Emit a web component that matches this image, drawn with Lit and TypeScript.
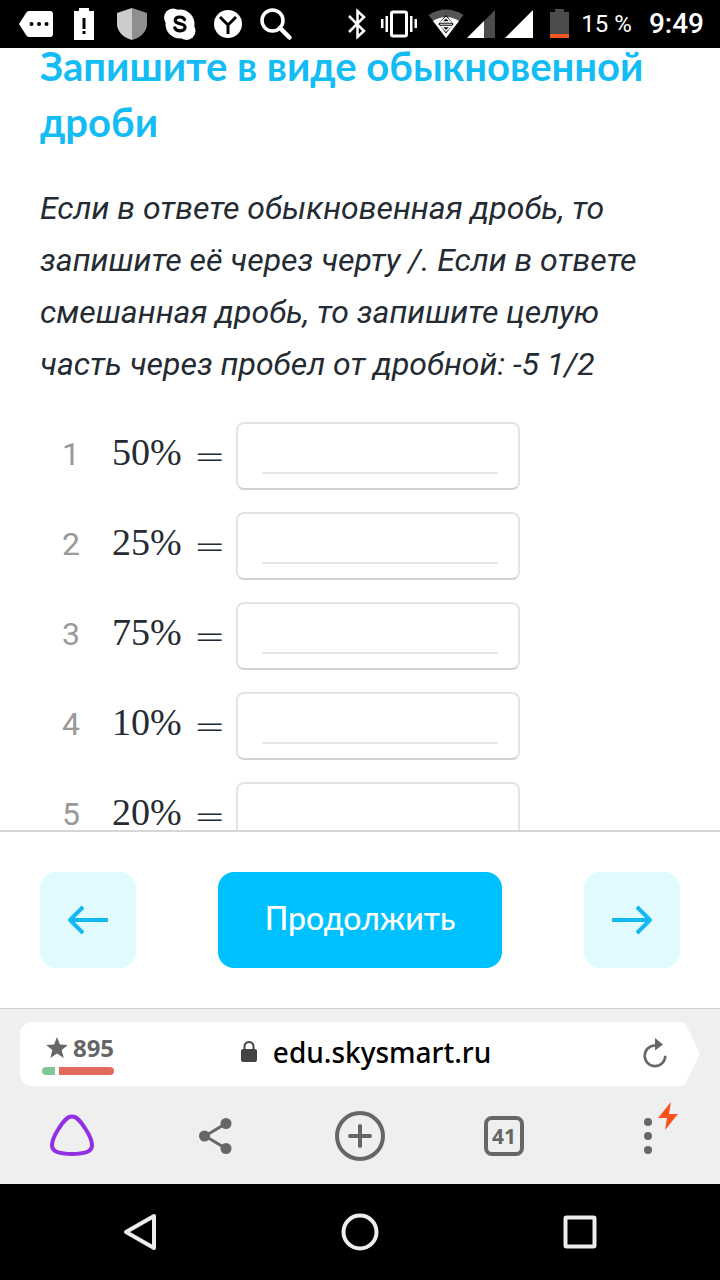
import { LitElement, html, css, svg } from "lit";
import { customElement, property } from "lit/decorators.js";

@customElement("status-bar")
class StatusBar extends LitElement {
  static styles = css`
    :host {
      display: flex;
      align-items: center;
      justify-content: space-between;
      height: 48px;
      padding: 0 16px 0 12px;
      background: #000;
      color: #fff;
      font-family: Roboto, sans-serif;
    }
    .group {
      display: flex;
      align-items: center;
    }
    svg {
      display: block;
      height: 48px;
    }
    .charge {
      margin-left: 3px;
      font-size: 24px;
      line-height: 48px;
    }
    .clock {
      margin-left: 17px;
      font-size: 28px;
      line-height: 48px;
      font-weight: 500;
    }
  `;

  render() {
    return html`
      <div class="group">
        <svg width="48" viewBox="12 0 48 48">
          <path d="M29 11H50q3 0 3 3V34q0 3-3 3H29q-2 0-3-2L19 24l7-11q1-2 3-2z" fill="#fff" />
          <circle cx="31.500" cy="24" r="2" /><circle cx="39" cy="24" r="2" /><circle cx="46.500" cy="24" r="2" />
        </svg>
        <svg width="48" viewBox="60 0 48 48">
          <path d="M79 8h10v3h5v29H74V11h5z" fill="#fff" />
          <path d="M82.500 18h3v11h-3zM82.500 31h3v3h-3z" />
        </svg>
        <svg width="48" viewBox="108 0 48 48">
          <path d="M132 8l15 5v11c0 8-7 14-15 16z" fill="#8f8f8f" />
          <path d="M132 8l-15 5v11c0 8 7 14 15 16z" fill="#ccc" />
        </svg>
        <svg width="48" viewBox="156 0 48 48">
          <circle cx="173" cy="17.500" r="9" fill="#fff" /><circle cx="186.500" cy="31" r="9" fill="#fff" />
          <circle cx="180" cy="24" r="14.500" fill="#fff" />
          <path d="M184.500 19.500c-1-2-2.600-2.500-4.800-2.500-2.800 0-4.500 1.300-4.500 3.300 0 5 9.800 2 9.800 7 0 2.300-2.200 3.500-5 3.500-2.500 0-4.300-1-5.200-3" fill="none" stroke="#000" stroke-width="3.200" stroke-linecap="round" />
        </svg>
        <svg width="48" viewBox="204 0 48 48">
          <circle cx="228" cy="24" r="14" fill="#fff" />
          <path d="M220 17l8 8 8-8M228 25v9" fill="none" stroke="#000" stroke-width="3" />
        </svg>
        <svg width="48" viewBox="252 0 48 48">
          <g fill="none" stroke="#fff">
            <circle cx="272.500" cy="20.500" r="10.500" stroke-width="3.500" />
            <path d="M280 28l9.500 9.500" stroke-width="4.500" stroke-linecap="round" />
          </g>
        </svg>
      </div>
      <div class="group">
        <svg width="30" viewBox="345 0 30 48">
          <path d="M349 16l15 15-6.500 6V11l6.500 6-15 15" fill="none" stroke="#fff" stroke-width="2.500" />
        </svg>
        <svg width="48" viewBox="375 0 48 48">
          <rect x="391.500" y="12" width="15" height="24" rx="1.500" fill="none" stroke="#fff" stroke-width="3" />
          <path d="M381 19h2.500v9H381zM385.500 16h2.500v16h-2.500zM410 16h2.500v16H410zM414.500 19h2.500v9h-2.500z" fill="#fff" />
        </svg>
        <svg width="44" viewBox="423 0 44 48">
          <path d="M428.500 15q17.500-11 35 0L446 38z" fill="#555" />
          <path d="M433 21q13-8 26 0L446 38z" fill="#fff" />
          <path d="M446 15l7.500 9-7.500 9.500-7.500-9.500z" />
          <path d="M446 17.500l4.500 4.500h-9zM446 31l4.500-4.500h-9z" fill="none" stroke="#fff" stroke-width="1.500" />
          <path d="M440 24.200h12" stroke="#fff" stroke-width="1" />
        </svg>
        <svg width="34" viewBox="467 0 34 48">
          <path d="M495 10v28h-28z" fill="#4c4c4c" /><path d="M484 21v17h-17z" fill="#fff" />
        </svg>
        <svg width="39" viewBox="501 0 39 48">
          <path d="M533 10v28h-28z" fill="#fff" />
        </svg>
        <svg width="38" viewBox="540 0 38 48">
          <path d="M555 9h9v3h5v22h-19V12h5z" fill="#4c4c4c" /><path d="M550 34h19v4h-19z" fill="#f4581c" />
        </svg>
        <span class="charge">15 %</span>
        <span class="clock">9:49</span>
      </div>
    `;
  }
}

@customElement("answer-row")
class AnswerRow extends LitElement {
  @property({ type: Number }) index = 1;
  @property() percent = "";

  static styles = css`
    :host {
      display: grid;
      grid-template-columns: 52px 124px minmax(0, 284px);
      align-items: center;
      padding-left: 20px;
    }
    .index {
      color: #999;
      font-size: 32px;
      line-height: 60px;
      padding: 0 2px 4px;
    }
    .formula {
      display: flex;
      align-items: center;
      gap: 12px;
      color: #242b33;
      font-family: "Liberation Serif", serif;
      font-size: 38px;
      line-height: 60px;
    }
    .percent {
      padding-bottom: 8px;
    }
    .equals {
      font-family: "DejaVu Sans", sans-serif;
      font-weight: 200;
    }
    .box {
      box-sizing: border-box;
      height: 68px;
      padding: 0 20px 14px 24px;
      border: 2px solid #e4e4e0;
      border-bottom-color: #d2d2d2;
      border-radius: 8px;
      background: #fff;
    }
    .answer {
      box-sizing: border-box;
      display: block;
      width: 100%;
      height: 50px;
      padding: 0;
      border: 0;
      border-bottom: 2px solid #e6e6e6;
      background: none;
      color: #242b33;
      font: 32px Roboto, sans-serif;
      outline: none;
    }
  `;

  render() {
    return html`
      <span class="index">${this.index}</span>
      <label class="formula" for="answer"><span class="percent">${this.percent}%</span><span class="equals">=</span></label>
      <div class="box"><input class="answer" id="answer" type="text" autocomplete="off" /></div>
    `;
  }
}

@customElement("browser-bar")
class BrowserBar extends LitElement {
  static styles = css`
    :host {
      display: block;
      padding: 13px 0 0;
      border-top: 1px solid #d0d0d0;
      background: #efefef;
      font-family: "Noto Sans", sans-serif;
    }
    button {
      display: flex;
      align-items: center;
      justify-content: center;
      padding: 0;
      border: 0;
      background: none;
      color: #666;
      font-family: inherit;
    }
    svg {
      display: block;
    }
    .omnibox {
      display: flex;
      margin: 0 20px;
      height: 64px;
    }
    .field {
      flex: 1;
      display: grid;
      grid-template-columns: 116px 1fr 50px;
      border-radius: 12px 0 0 12px;
      background: #fff;
    }
    .rating {
      flex-direction: column;
      gap: 5px;
    }
    .score {
      display: flex;
      align-items: center;
      gap: 5px;
      padding-left: 4px;
      font-size: 24px;
      line-height: 28px;
      font-weight: 700;
    }
    .meter {
      display: flex;
      gap: 4px;
      width: 72px;
      height: 8px;
    }
    .good {
      flex: 13;
      border-radius: 4px 0 0 4px;
      background: #7fc796;
    }
    .bad {
      flex: 55;
      border-radius: 0 4px 4px 0;
      background: #e26b5d;
    }
    .address {
      gap: 16px;
      padding: 0 34px 4px 0;
      color: #000;
      font-size: 28px;
      font-weight: 500;
    }
    .tools {
      box-sizing: border-box;
      display: grid;
      grid-template-columns: repeat(5, 1fr);
      height: 98px;
      padding-top: 2px;
    }
    .count {
      box-sizing: border-box;
      width: 40px;
      height: 40px;
      border: 4px solid #666;
      border-radius: 8px;
      font-size: 21px;
      line-height: 32px;
      font-weight: 700;
    }
  `;

  render() {
    return html`
      <div class="omnibox">
        <div class="field">
          <button class="rating" aria-label="Рейтинг сайта">
            <span class="score">
              <svg width="22" height="22" viewBox="0 0 22 22">
                <path d="M11 0l2.900 7.500 7.900.5-6.100 5 2 8L11 16.600 4.300 21l2-8L.2 8l7.900-.5z" fill="#666" />
              </svg>
              895
            </span>
            <span class="meter"><span class="good"></span><span class="bad"></span></span>
          </button>
          <button class="address">
            <svg width="16" height="22" viewBox="0 0 16 22">
              <rect y="8" width="16" height="13" rx="2" fill="#444" />
              <path d="M3.500 9V5.500a4.500 4.500 0 0 1 9 0V9" fill="none" stroke="#444" stroke-width="2" />
            </svg>
            edu.skysmart.ru
          </button>
          <button aria-label="Обновить">
            <svg width="26" height="34" viewBox="0 0 26 34">
              <path d="M13 8.500A10.300 10.300 0 1 0 23.300 18.800" fill="none" stroke="#666" stroke-width="2.600" />
              <path d="M13 1l8 6.500-8 6z" fill="#666" />
            </svg>
          </button>
        </div>
        <svg width="20" height="64" viewBox="0 0 20 64">
          <path d="M0 0q4 0 6 3L20 31.500 6 61q-2 3-6 3z" fill="#fff" />
        </svg>
      </div>
      <div class="tools">
        <button aria-label="Алиса">
          <svg width="48" height="48" viewBox="0 0 48 48">
            <path d="M24 4.500c5.500 0 9.500 6 13.500 12.500C41.500 23 44 29.500 44 33.500c0 6.500-9 8.500-20 8.500S4 40 4 33.500C4 29.500 6.500 23 10.500 17 14.500 10.500 18.500 4.500 24 4.500z" fill="none" stroke="#9430e4" stroke-width="4" />
          </svg>
        </button>
        <button aria-label="Поделиться">
          <svg width="36" height="38" viewBox="0 0 36 38">
            <path d="M28 6.500L7 19l21 12.500" fill="none" stroke="#666" stroke-width="3" />
            <g fill="#666"><circle cx="28" cy="6.500" r="5.500" /><circle cx="6.500" cy="19" r="5.500" /><circle cx="28" cy="31.500" r="5.500" /></g>
          </svg>
        </button>
        <button aria-label="Новая вкладка">
          <svg width="50" height="50" viewBox="0 0 50 50">
            <circle cx="25" cy="25" r="23" fill="none" stroke="#666" stroke-width="4" />
            <path d="M25 15v20M15 25h20" stroke="#666" stroke-width="4" stroke-linecap="round" />
          </svg>
        </button>
        <button aria-label="Вкладки"><span class="count">41</span></button>
        <button aria-label="Меню">
          <svg width="72" height="72" viewBox="0 0 72 72">
            <g fill="#666"><circle cx="36" cy="22" r="4" /><circle cx="36" cy="36" r="4" /><circle cx="36" cy="50" r="4" /></g>
            <path d="M59 2L46 18h9l-2 12 13-16h-9z" fill="#f9521a" />
          </svg>
        </button>
      </div>
    `;
  }
}

const arrow = (points: string) => svg`
  <path d=${points} fill="none" stroke="#16b8f3" stroke-width="4" stroke-linejoin="round" />
`;

@customElement("app-root")
class AppRoot extends LitElement {
  static styles = css`
    :host {
      display: flex;
      flex-direction: column;
      height: 100vh;
      background: #fff;
      font-family: Roboto, sans-serif;
    }
    .lesson {
      flex: 1;
      min-height: 0;
      overflow: hidden;
      padding: 0 40px;
    }
    .title {
      margin: -10px 0 0;
      color: #14bcf5;
      font: 700 40px/56px Lato, sans-serif;
    }
    .hint {
      margin: 32px 0;
      color: #242b33;
      font-size: 32px;
      line-height: 52px;
      font-style: italic;
    }
    .tasks {
      display: grid;
      gap: 22px;
    }
    .actions {
      display: flex;
      align-items: center;
      justify-content: space-between;
      padding: 40px;
      border-top: 2px solid #d6d6d6;
    }
    button {
      display: flex;
      align-items: center;
      justify-content: center;
      border: 0;
      padding: 0;
      background: none;
    }
    .step {
      width: 96px;
      height: 96px;
      border-radius: 16px;
      background: #e2fbfe;
    }
    .continue {
      width: 284px;
      height: 96px;
      padding-bottom: 4px;
      border-radius: 16px;
      background: #00c1ff;
      color: #fff;
      font: 500 32px/40px Lato, sans-serif;
    }
    .system {
      display: grid;
      grid-template-columns: repeat(3, 1fr);
      height: 96px;
      padding: 0 30px;
      background: #000;
    }
  `;

  render() {
    const percents = ["50", "25", "75", "10", "20"];
    return html`
      <status-bar></status-bar>
      <main class="lesson">
        <h1 class="title">Запишите в виде обыкновенной дроби</h1>
        <p class="hint">
          Если в ответе обыкновенная дробь, то запишите её через черту /. Если в ответе смешанная дробь, то
          запишите целую часть через пробел от дробной: -5 1/2
        </p>
        <div class="tasks">
          ${percents.map((p, i) => html`<answer-row .index=${i + 1} .percent=${p}></answer-row>`)}
        </div>
      </main>
      <div class="actions">
        <button class="step" aria-label="Назад">
          <svg width="40" height="32" viewBox="0 0 40 32">${arrow("M15 3L2 16l13 13M2 16h38")}</svg>
        </button>
        <button class="continue">Продолжить</button>
        <button class="step" aria-label="Вперёд">
          <svg width="40" height="32" viewBox="0 0 40 32">${arrow("M25 3l13 13-13 13M38 16H0")}</svg>
        </button>
      </div>
      <browser-bar></browser-bar>
      <nav class="system">
        <button aria-label="Назад">
          <svg width="40" height="40" viewBox="0 0 40 40">
            <path d="M34 4v32L6 20z" fill="none" stroke="#eee" stroke-width="4" stroke-linejoin="round" />
          </svg>
        </button>
        <button aria-label="Домой">
          <svg width="40" height="40" viewBox="0 0 40 40">
            <circle cx="20" cy="20" r="16.500" fill="none" stroke="#eee" stroke-width="4" />
          </svg>
        </button>
        <button aria-label="Недавние">
          <svg width="40" height="40" viewBox="0 0 40 40">
            <rect x="5.500" y="5.500" width="29" height="29" rx="1" fill="none" stroke="#eee" stroke-width="4" />
          </svg>
        </button>
      </nav>
    `;
  }
}
